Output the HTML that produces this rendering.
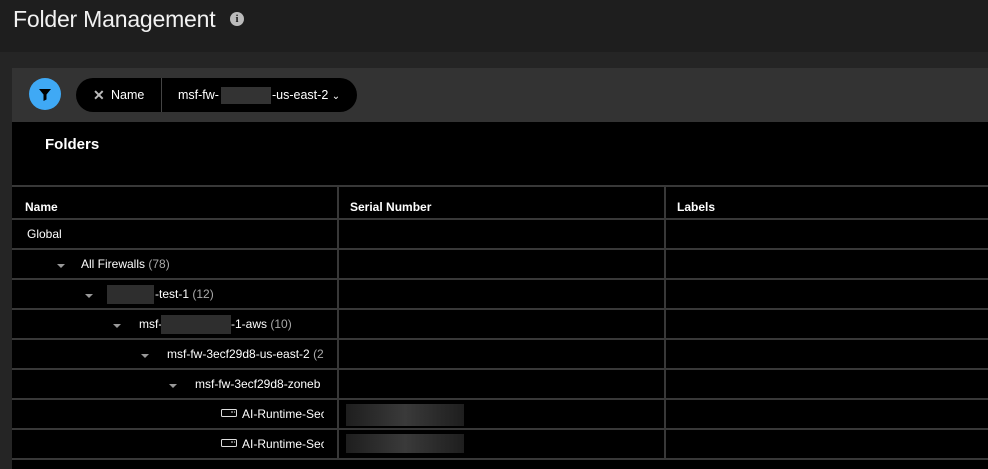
<!DOCTYPE html>
<html><head><style>
*{margin:0;padding:0;box-sizing:border-box}
body{width:988px;height:469px;background:#252525;font-family:"Liberation Sans",sans-serif;color:#fff;position:relative;overflow:hidden;font-size:12px}
.hdr{position:absolute;left:0;top:0;width:988px;height:52px;background:#1e1e1e}
.title{position:absolute;left:13px;top:6px;font-size:23px;color:#f2f2f2;letter-spacing:-0.2px}
.info{position:absolute;left:230px;top:12px;width:14px;height:14px;border-radius:50%;background:#bbb;color:#1e1e1e;font-size:11px;font-weight:bold;text-align:center;line-height:14px;font-family:"Liberation Serif",serif}
.bar{position:absolute;left:12px;top:68px;width:976px;height:54px;background:#333}
.fbtn{position:absolute;left:29px;top:78px;width:32px;height:32px;border-radius:50%;background:#3fa9f5}
.pill{position:absolute;left:76px;top:78px;width:281px;height:34px;border-radius:17px;background:#000}
.main{position:absolute;left:12px;top:122px;width:976px;height:347px;background:#000}
.t{position:absolute;white-space:nowrap}
.hl{position:absolute;left:12px;width:976px;height:2px;background:#383838}
.vl{position:absolute;width:2px;background:#383838}
.blur{position:absolute;background:#2e2e2e}
.caret{position:absolute;width:0;height:0;border-left:4px solid transparent;border-right:4px solid transparent;border-top:4px solid #999}
.g{color:#aaa}
</style></head><body>
<div class="hdr"></div>
<div class="title">Folder Management</div>
<div class="info">i</div>
<div class="bar"></div>
<div class="fbtn"><svg width="32" height="32" viewBox="0 0 32 32"><path d="M10 11h12l-4.5 5.5v5l-3 1.5v-6.5z" fill="#000"/></svg></div>
<div class="pill"></div>
<div class="t" style="left:93px;top:87px;color:#bbb;font-size:14px;font-weight:bold">✕</div>
<div class="t" style="left:111px;top:88px;font-size:12.5px">Name</div>
<div style="position:absolute;left:161px;top:78px;width:1px;height:34px;background:#444"></div>
<div class="t" style="left:178px;top:88px;font-size:12.5px">msf-fw-</div>
<div class="blur" style="left:221px;top:87px;width:50px;height:17px;background:#333"></div>
<div class="t" style="left:272px;top:88px;font-size:12.5px">-us-east-2 <span style="font-size:10px">⌄</span></div>
<div class="main"></div>
<div class="t" style="left:45px;top:136px;font-size:15px;font-weight:bold">Folders</div>
<div class="hl" style="top:185px"></div>
<div class="hl" style="top:218px"></div>
<div class="hl" style="top:248px"></div>
<div class="hl" style="top:278px"></div>
<div class="hl" style="top:308px"></div>
<div class="hl" style="top:338px"></div>
<div class="hl" style="top:368px"></div>
<div class="hl" style="top:398px"></div>
<div class="hl" style="top:428px"></div>
<div class="hl" style="top:458px"></div>
<div class="vl" style="left:337px;top:187px;height:272px"></div>
<div class="vl" style="left:664px;top:187px;height:272px"></div>
<div class="t" style="left:25px;top:200px;font-weight:bold">Name</div>
<div class="t" style="left:350px;top:200px;font-weight:bold">Serial Number</div>
<div class="t" style="left:677px;top:200px;font-weight:bold">Labels</div>
<div class="t" style="left:27px;top:227px">Global</div>
<div class="caret" style="left:57px;top:264px"></div>
<div class="t" style="left:81px;top:257px">All Firewalls <span class="g">(78)</span></div>
<div class="caret" style="left:85px;top:294px"></div>
<div class="blur" style="left:107px;top:285px;width:47px;height:19px"></div>
<div class="t" style="left:155px;top:287px">-test-1 <span class="g">(12)</span></div>
<div class="caret" style="left:113px;top:324px"></div>
<div class="t" style="left:139px;top:317px">msf-</div>
<div class="blur" style="left:161px;top:315px;width:70px;height:19px"></div>
<div class="t" style="left:231px;top:317px">-1-aws <span class="g">(10)</span></div>
<div class="caret" style="left:141px;top:354px"></div>
<div class="t" style="left:167px;top:347px;width:157px;overflow:hidden">msf-fw-3ecf29d8-us-east-2 <span class="g">(2</span></div>
<div class="caret" style="left:169px;top:384px"></div>
<div class="t" style="left:195px;top:377px;width:129px;overflow:hidden">msf-fw-3ecf29d8-zoneb</div>
<svg style="position:absolute;left:221px;top:409px" width="16" height="8"><rect x="0.5" y="0.5" width="15" height="7" rx="1" fill="none" stroke="#ddd"/><path d="M10 3h2M13 3h1" stroke="#ddd"/></svg>
<div class="t" style="left:242px;top:407px;width:82px;overflow:hidden">AI-Runtime-Sec</div>
<div class="blur" style="left:346px;top:404px;width:118px;height:22px;background:linear-gradient(90deg,#1e1e1e,#3a3a3a,#1e1e1e)"></div>
<svg style="position:absolute;left:221px;top:439px" width="16" height="8"><rect x="0.5" y="0.5" width="15" height="7" rx="1" fill="none" stroke="#ddd"/><path d="M10 3h2M13 3h1" stroke="#ddd"/></svg>
<div class="t" style="left:242px;top:437px;width:82px;overflow:hidden">AI-Runtime-Sec</div>
<div class="blur" style="left:346px;top:434px;width:118px;height:19px;background:linear-gradient(90deg,#1e1e1e,#3a3a3a,#1e1e1e)"></div>
</body></html>
